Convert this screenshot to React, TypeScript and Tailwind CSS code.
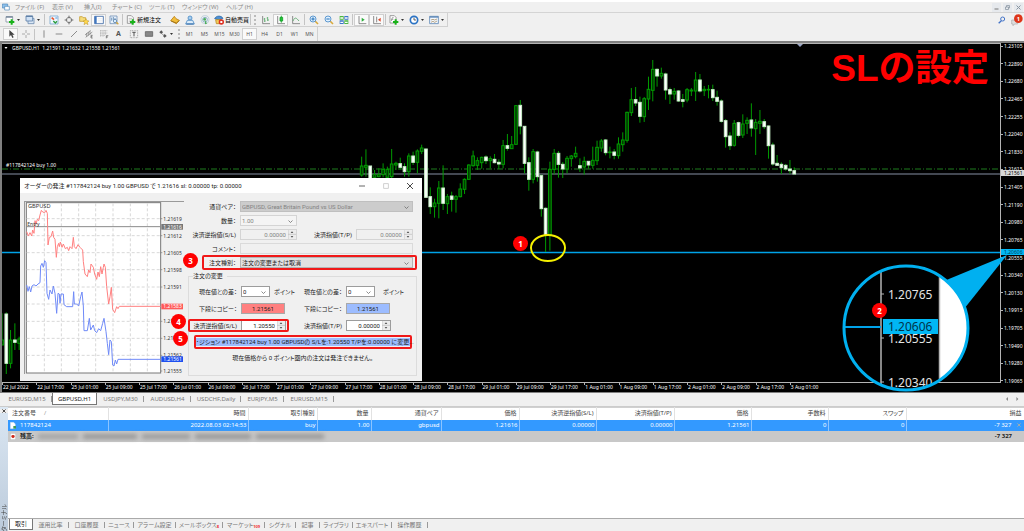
import type { ReactNode } from "react"

// Candle runs. Numbers are thirds of a pixel: high, low, body top, body bottom, 1 = bearish
type Run = { x: number; y: number; rows: number[][] }

const STEP = 12.86

const runs: Run[] = [
  {
    x: 6,
    y: 450,
    rows: [
      [490, 585, 570, 585, 0], [487, 672, 492, 640, 1], [540, 655, 570, 640, 0], [520, 600, 570, 577, 1], [560, 600, 567, 580, 0],
    ],
  },
  {
    x: 1085,
    y: 240,
    rows: [
      [230, 290, 258, 285, 0], [208, 290, 256, 262, 0], [258, 292, 258, 300, 1], [270, 300, 284, 292, 0], [265, 292, 284, 290, 0],
      [250, 292, 268, 284, 0], [260, 300, 268, 292, 0], [207, 300, 252, 290, 0], [245, 270, 250, 255, 0], [233, 268, 251, 262, 1],
      [250, 290, 260, 275, 1], [220, 290, 228, 275, 0], [215, 255, 228, 247, 1], [208, 280, 213, 247, 0], [194, 222, 204, 214, 0],
      [206, 354, 207, 352, 1], [322, 402, 350, 380, 1], [356, 413, 369, 380, 0], [303, 415, 324, 370, 0], [256, 390, 324, 370, 1],
      [342, 402, 350, 371, 0], [335, 395, 348, 358, 1], [345, 398, 350, 358, 0], [310, 352, 327, 350, 0], [295, 342, 298, 328, 0],
      [253, 300, 255, 298, 0], [212, 260, 228, 257, 0], [232, 270, 242, 256, 0], [230, 266, 232, 248, 0], [226, 252, 231, 242, 1],
      [229, 265, 236, 242, 0], [222, 250, 238, 248, 1], [238, 267, 247, 252, 1], [180, 265, 197, 253, 0], [162, 212, 197, 205, 1],
      [168, 207, 194, 206, 0], [75, 195, 77, 193, 0], [60, 163, 76, 138, 1], [138, 280, 139, 250, 1], [232, 332, 248, 298, 1],
      [207, 310, 215, 298, 0], [212, 305, 216, 290, 1],
    ],
  },
  {
    x: 1624,
    y: 150,
    rows: [
      [374, 500, 377, 476, 1], [472, 606, 475, 556, 1], [335, 602, 358, 553, 0], [297, 373, 310, 358, 0], [303, 383, 310, 343, 1],
      [336, 384, 343, 357, 1], [318, 370, 325, 357, 0], [315, 350, 318, 326, 0], [290, 325, 310, 320, 0], [325, 366, 347, 354, 1],
      [320, 374, 334, 351, 0], [333, 356, 334, 345, 1], [290, 356, 331, 346, 0], [272, 345, 292, 332, 0], [267, 305, 273, 294, 0],
      [267, 316, 270, 308, 1], [290, 325, 306, 308, 0], [297, 328, 306, 316, 1], [262, 326, 282, 317, 0], [247, 305, 270, 284, 0],
      [185, 278, 187, 271, 0], [114, 198, 149, 188, 0], [111, 168, 149, 159, 1], [140, 218, 157, 199, 1], [141, 216, 146, 200, 0],
      [80, 180, 118, 147, 0], [30, 154, 58, 121, 0], [55, 110, 58, 78, 1], [53, 86, 70, 78, 0], [68, 149, 72, 120, 1],
      [113, 162, 119, 132, 1], [114, 149, 124, 132, 0], [120, 156, 123, 153, 1], [132, 172, 149, 154, 1], [114, 157, 119, 150, 0],
      [114, 138, 120, 123, 0], [66, 153, 90, 123, 0], [72, 128, 90, 123, 1], [108, 138, 118, 122, 0], [105, 145, 118, 120, 0],
      [104, 153, 119, 143, 1], [122, 167, 142, 154, 1], [148, 218, 153, 214, 1], [207, 293, 212, 260, 1], [247, 300, 258, 287, 1],
      [210, 290, 220, 286, 0], [215, 262, 218, 256, 1], [193, 264, 222, 255, 0], [202, 252, 211, 220, 0], [160, 260, 210, 234, 1],
      [207, 315, 217, 236, 0], [180, 252, 214, 220, 0], [207, 237, 215, 230, 1], [226, 326, 228, 287, 1], [278, 347, 285, 342, 1],
      [315, 346, 340, 346, 1], [337, 372, 343, 353, 1], [342, 362, 346, 357, 1], [330, 372, 357, 362, 1], [352, 374, 362, 372, 1],
    ],
  },
]

const prices = [
  "1.23105", "1.22890", "1.22680", "1.22465", "1.22255", "1.22040", "1.21830", "1.21615", "1.21405", "1.21190",
  "1.20980", "1.20765", "1.20555", "1.20340", "1.20130", "1.19915", "1.19705", "1.19490", "1.19280", "1.19065",
]

const times = [
  "22 Jul 2022", "22 Jul 17:00", "25 Jul 01:00", "25 Jul 09:00", "25 Jul 17:00", "26 Jul 01:00", "26 Jul 09:00", "26 Jul 17:00",
  "27 Jul 01:00", "27 Jul 09:00", "27 Jul 17:00", "28 Jul 01:00", "28 Jul 09:00", "28 Jul 17:00", "29 Jul 01:00", "29 Jul 09:00",
  "29 Jul 17:00", "1 Aug 01:00", "1 Aug 09:00", "1 Aug 17:00", "2 Aug 01:00", "2 Aug 09:00", "2 Aug 17:00", "3 Aug 01:00",
]

const redTicks =
  "80,245 85,258 90,248 95,258 98,240 102,250 105,212 108,222 112,208 116,212 120,195 124,181 128,186 134,188 138,181 142,190 144,285 148,262 153,260 158,243 161,262 165,268 169,322 172,290 176,280 178,290 181,276 186,292 190,282 196,296 202,292 206,302 210,290 216,296 220,262 223,290 228,296 234,284 240,292 248,300 250,335 255,372 262,380 266,360 270,368 273,342 280,352 284,372 290,388 294,366 298,380 302,350 306,372 310,352 312,342 316,352 320,410 326,462 330,440 334,412 338,478 344,488 350,470 354,476 358,469 482,469"
const blueTicks =
  "80,405 84,424 88,410 92,426 96,408 102,404 108,408 114,402 120,398 122,348 126,340 130,352 134,332 138,338 141,430 146,448 150,420 156,432 160,408 165,430 170,490 174,430 178,432 180,460 183,432 190,432 192,464 200,470 218,470 221,425 223,462 230,462 236,468 242,440 246,426 250,468 252,542 262,542 268,505 272,540 280,525 284,542 290,548 296,536 302,542 308,520 312,505 318,545 322,580 326,614 330,570 334,575 338,645 342,648 346,630 350,642 354,628 482,628"

const tickPrices: [number, string][] = [
  [206, "1.21619"], [257, "1.21612"], [308, "1.21605"], [359, "1.21598"], [411, "1.21591"],
  [514, "1.21576"], [565, "1.21569"], [616, "1.21562"], [663, "1.21555"],
]

// Toolbar icons, all on a 30 x 30 grid
function Icon({ children }: { children: ReactNode }) {
  return (
    <svg viewBox="0 0 30 30" className="size-[10px] shrink-0" fill="none" strokeWidth="2.5">
      {children}
    </svg>
  )
}

const plus = <path d="M20 13v16M12 21h16" stroke="#19b219" strokeWidth="6" />

const icons: Record<string, ReactNode> = {
  newChart: <Icon><path d="M3 5h20v16H3z" fill="#fff" stroke="#8795a3" /><path d="M3 6h20" stroke="#6f8196" strokeWidth="4" />{plus}</Icon>,
  profiles: <Icon><path d="M9 10h18v16H9z" fill="#dbe8f6" stroke="#6d8cae" /><path d="M3 3h20v15H3z" fill="#cfe1f5" stroke="#5f81a8" /><path d="M3 4h20" stroke="#5f81a8" strokeWidth="4" /></Icon>,
  market: <Icon><path d="M3 3h24v24H3z" fill="#eef7ff" stroke="#7ba9d0" /><path d="M8 8l7 6" stroke="#e8562d" strokeWidth="5" /><path d="M13 18l6 6 5-5" stroke="#2a9d3c" strokeWidth="4" /><path d="M19 9h6" stroke="#2f7fd0" /></Icon>,
  target: <Icon><circle cx="15" cy="15" r="8" stroke="#777" /><path d="M15 2v8M15 20v8M2 15h8M20 15h8" stroke="#666" strokeWidth="3" /></Icon>,
  folders: <Icon><path d="M2 5h8l2 3h8v11H2z" fill="#f5dc7a" stroke="#c9a13a" /><path d="M21 11l3 6 6 1-5 4 2 7-6-4-6 4 2-7-5-4 6-1z" fill="#ffd84a" stroke="#bf9221" strokeWidth="1.5" /></Icon>,
  terminal: <Icon><path d="M2 4h26v22H2z" fill="#fff" stroke="#3c68a3" /><path d="M5 4v22" stroke="#3f76c0" strokeWidth="6" /><path d="M12 11h14M12 16h14M12 21h14" stroke="#d6dfe8" strokeWidth="1.5" /></Icon>,
  tester: <Icon><path d="M3 3h21v23H3z" fill="#e9f2fb" stroke="#7394b8" /><path d="M8 8v9M13 6v9M18 9v7" stroke="#5b85b0" /><circle cx="18" cy="18" r="5" fill="#d9efff" stroke="#6488ac" /><path d="M22 22l6 6" stroke="#d6a63b" strokeWidth="4" /></Icon>,
  order: <Icon><path d="M4 2h12l6 6v17H4z" fill="#fff" stroke="#8b8b8b" /><path d="M8 10h10M8 15h7M8 20h5" stroke="#b4b4b4" />{plus}</Icon>,
  hat: <Icon><path d="M2 17L13 4l5 7 10 5-9 10z" fill="#f1bd3a" stroke="#ba8115" /><path d="M3 18l16 6 9-7" stroke="#8c6011" strokeWidth="2" /></Icon>,
  community: <Icon><circle cx="15" cy="9" r="6" fill="#a8cff0" stroke="#4a8ac4" /><path d="M7 16h16l5 11H2z" fill="#dcecfa" stroke="#4a8ac4" /><path d="M4 27h22" stroke="#2b67a6" strokeWidth="3" /></Icon>,
  signal: <Icon><circle cx="15" cy="14" r="12" stroke="#b7cbd8" /><circle cx="15" cy="14" r="7" stroke="#7aa8c2" /><circle cx="14" cy="13" r="4" fill="#4cae5b" /><path d="M15 15v13l6-2z" fill="#4cae5b" /></Icon>,
  auto: <Icon><path d="M2 11C6 1 22 1 27 10l-12 5z" fill="#4f8fd0" stroke="#2f6cab" /><path d="M5 14h16l-2 12H7z" fill="#f4cd5c" stroke="#b98c24" /><circle cx="22" cy="21" r="8" fill="#dd2f21" /><path d="M19 18h6v6h-6z" fill="#fff" /></Icon>,
  bars: <Icon><path d="M5 3v23h22" stroke="#777" /><path d="M11 9v12M8 12h3M11 18h3M20 6v12M17 9h3M20 15h4" stroke="#58a868" /></Icon>,
  candles: <Icon><path d="M5 3v23h22" stroke="#777" /><path d="M16 2v21" stroke="#12a126" /><path d="M12 7h8v11h-8z" fill="#24c139" stroke="#12a126" /></Icon>,
  line: <Icon><path d="M5 3v23h22" stroke="#777" /><path d="M6 18C12 4 16 9 24 18" stroke="#58a868" /></Icon>,
  zoomIn: <Icon><path d="M18 18l9 9" stroke="#d9a93a" strokeWidth="5" /><circle cx="12" cy="12" r="9" fill="#dff0ff" stroke="#4588c8" /><path d="M12 7v10M7 12h10" stroke="#2672b8" strokeWidth="3" /></Icon>,
  zoomOut: <Icon><path d="M18 18l9 9" stroke="#d9a93a" strokeWidth="5" /><circle cx="12" cy="12" r="9" fill="#dff0ff" stroke="#4588c8" /><path d="M7 12h10" stroke="#2672b8" strokeWidth="3" /></Icon>,
  tile: <Icon><path d="M2 3h12v11H2zM16 16h12v11H16z" fill="#4bb73f" /><path d="M16 3h12v11H16zM2 16h12v11H2z" fill="#3c76c8" /><path d="M4 9h8M18 9h8M4 22h8M18 22h8" stroke="#fff" strokeWidth="4" /></Icon>,
  scroll: <Icon><path d="M6 3v23h22" stroke="#777" /><path d="M14 8l9 6-9 6z" fill="#2eae3d" /></Icon>,
  shift: <Icon><path d="M5 3v23h22M14 5v17" stroke="#777" /><path d="M26 8l-8 6 8 6z" fill="#dc4a2c" /></Icon>,
  indicator: <Icon><path d="M3 2h13l5 5v17H3z" fill="#fff" stroke="#8b8b8b" /><path d="M7 18l3-10h4M7 13h6" stroke="#777" strokeWidth="2" />{plus}</Icon>,
  clock: <Icon><circle cx="15" cy="15" r="11" fill="#fff" stroke="#2b73c4" strokeWidth="5" /><path d="M15 8v7h6" stroke="#444" /></Icon>,
  template: <Icon><path d="M2 4h26v22H2z" fill="#f3f9ff" stroke="#5b86b5" /><path d="M2 6h26" stroke="#5b86b5" strokeWidth="4" /><path d="M6 15l6-2 5 2 7-3M6 22l6-3 5 3 7-4" stroke="#9a7a4c" strokeWidth="2" /></Icon>,
  cursor: <Icon><path d="M10 3v20l5-5 4 9 4-2-4-8h7z" fill="#444" /></Icon>,
  cross: <Icon><path d="M15 3v9M15 18v9M3 15h9M18 15h9" stroke="#888" strokeWidth="2" /></Icon>,
  vline: <Icon><path d="M15 4v22" stroke="#777" /></Icon>,
  hline: <Icon><path d="M5 15h20" stroke="#777" /></Icon>,
  trend: <Icon><path d="M6 24L24 6" stroke="#777" /></Icon>,
  channel: <Icon><path d="M3 18L20 4M5 25L25 9M8 12v11M13 9v11M18 6v11" stroke="#777" strokeWidth="2" /><path d="M26 19h-5v8h5M21 23h4" stroke="#555" strokeWidth="2" /></Icon>,
  fibo: <Icon><path d="M3 5h22M3 12h22M3 19h16M5 4v20M12 4v20M19 4v14" stroke="#aaa" strokeWidth="2" strokeDasharray="3 1" /><path d="M22 28v-8h6M22 24h5" stroke="#555" strokeWidth="2" /></Icon>,
  label: <Icon><path d="M4 5h22v21H4z" stroke="#888" strokeWidth="2" strokeDasharray="3 2" /><path d="M10 10h10M15 10v12" stroke="#555" strokeWidth="3" /></Icon>,
  rect: <Icon><path d="M4 8h22v14H4z" fill="#888" stroke="#666" /></Icon>,
  arrows: <Icon><path d="M4 10l6-6 5 6-5 5z" fill="#555" /><path d="M15 21l5-6 6 6-6 5z" fill="#555" /><path d="M12 14l5 5" stroke="#777" /></Icon>,
}

function Tool({ name, label, active, menu, text }: { name: string; label: string; active?: boolean; menu?: boolean; text?: string }) {
  return (
    <button
      aria-label={label}
      className={
        "flex h-3 shrink-0 items-center " +
        (active ? "w-[15px] justify-center border border-[#d0d0d0] bg-[#fafafa]" : menu ? "w-5 gap-0.5 pl-0.5" : text ? "gap-px pl-0.5" : "w-[15px] justify-center")
      }
    >
      {icons[name]}
      {text && <span className="text-[6px] text-black">{text}</span>}
      {menu && <svg viewBox="0 0 6 4" className="h-[2px] w-[3px]"><path d="M0 0h6L3 4z" fill="#333" /></svg>}
    </button>
  )
}

const Sep = () => <span className="mx-px h-[11px] w-px shrink-0 bg-[#c4c4c4]" />
const Grip = () => <span className="mx-[2px] h-[10px] shrink-0 border-l-2 border-dotted border-[#bbb]" />

function TimeFrame({ name, active }: { name: string; active?: boolean }) {
  return (
    <button className={"h-3 w-[15px] shrink-0 text-[5px] text-[#555] " + (active ? "border border-[#d0d0d0] bg-[#fafafa]" : "")}>{name}</button>
  )
}

function Header() {
  return (
    <header className="shrink-0 bg-[#f0f0f0]">
      <div className="flex h-[13px] items-center border-t-2 border-b border-t-white border-b-[#d4d4d4] text-[6px] text-[#8c8c8c]">
        <svg viewBox="0 0 24 24" className="mr-[5px] ml-[2px] size-2">
          <path d="M1 3h16v12H1z" fill="#8ec1ec" stroke="#4d86ba" strokeWidth="2" />
          <path d="M8 10h14v11H8z" fill="#fff" stroke="#4d86ba" strokeWidth="2" />
        </svg>
        <nav className="flex">
          <a href="#" className="w-[37px]">ファイル (F)</a>
          <a href="#" className="w-8">表示 (V)</a>
          <a href="#" className="w-7">挿入(I)</a>
          <a href="#" className="w-[37px]">チャート (C)</a>
          <a href="#" className="w-[33px]">ツール (T)</a>
          <a href="#" className="w-11">ウィンドウ (W)</a>
          <a href="#">ヘルプ (H)</a>
        </nav>
        <div className="ml-auto flex gap-[2px] pr-px">
          <button aria-label="最小化" className="flex size-[9px] items-center justify-center bg-[#e6e9ed]"><svg viewBox="0 0 10 10" className="size-[5px]"><path d="M1 8h8" stroke="#777" strokeWidth="2" /></svg></button>
          <button aria-label="元に戻す" className="flex size-[9px] items-center justify-center bg-[#e6e9ed]"><svg viewBox="0 0 10 10" className="size-[5px]" fill="none" stroke="#8894a0" strokeWidth="1.5"><path d="M1 4h6v5H1zM3 4V1h6v5H7" /></svg></button>
          <button aria-label="閉じる" className="flex size-[9px] items-center justify-center bg-[#e6e9ed]"><svg viewBox="0 0 10 10" className="size-[5px]"><path d="M1 1l8 8M9 1L1 9" stroke="#8894a0" strokeWidth="2" /></svg></button>
        </div>
      </div>
      <div className="flex">
        <div>
          <div className="flex h-[14px] items-center border-r border-b border-[#d0d0d0] pl-[3px]">
            <Tool name="newChart" label="新規チャート" menu />
            <Tool name="profiles" label="プロファイル" menu />
            <Sep />
            <Tool name="market" label="気配値表示" />
            <Tool name="target" label="データウィンドウ" />
            <Tool name="folders" label="ナビゲーター" />
            <Tool name="terminal" label="ターミナル" active />
            <Tool name="tester" label="ストラテジーテスター" />
            <Sep />
            <Tool name="order" label="新規注文" text="新規注文" />
            <span className="w-[6px]" />
            <Tool name="hat" label="MetaEditor" />
            <Tool name="community" label="コミュニティ" />
            <Tool name="signal" label="シグナル" />
            <Tool name="auto" label="自動売買" text="自動売買" />
            <Sep />
            <Grip />
            <Tool name="bars" label="バーチャート" />
            <Tool name="candles" label="ローソク足" active />
            <Tool name="line" label="ラインチャート" />
            <Sep />
            <Tool name="zoomIn" label="拡大" />
            <Tool name="zoomOut" label="縮小" />
            <Tool name="tile" label="整列" />
            <Sep />
            <Tool name="scroll" label="自動スクロール" active />
            <Tool name="shift" label="チャートシフト" active />
            <Sep />
            <Tool name="indicator" label="インディケータ" menu />
            <Tool name="clock" label="時間足" menu />
            <Tool name="template" label="テンプレート" menu />
          </div>
          <div className="flex">
            <div className="flex h-[14px] items-center border-r border-[#d0d0d0] pl-[3px]">
              <Tool name="cursor" label="カーソル" active />
              <Tool name="cross" label="十字カーソル" />
              <Sep />
              <Tool name="vline" label="垂直線" />
              <Tool name="hline" label="水平線" />
              <Tool name="trend" label="トレンドライン" />
              <Tool name="channel" label="チャネル" />
              <Tool name="fibo" label="フィボナッチ" />
              <button className="h-3 w-[15px] text-[7px] leading-3 font-bold text-[#555]">A</button>
              <Tool name="label" label="テキストラベル" />
              <Tool name="rect" label="図形" />
              <Tool name="arrows" label="矢印" menu />
              <Grip />
              <TimeFrame name="M1" />
              <TimeFrame name="M5" />
              <TimeFrame name="M15" />
              <TimeFrame name="M30" />
              <TimeFrame name="H1" active />
              <TimeFrame name="H4" />
              <TimeFrame name="D1" />
              <TimeFrame name="W1" />
              <TimeFrame name="MN" />
            </div>
          </div>
        </div>
        <div className="ml-auto flex items-start gap-[5px] pt-px pr-px">
          <button aria-label="検索" className="pt-[2px]">
            <svg viewBox="0 0 24 24" className="size-2" fill="none"><circle cx="14" cy="9" r="6" stroke="#4474c8" strokeWidth="3" /><path d="M10 14l-8 8" stroke="#4474c8" strokeWidth="4" /></svg>
          </button>
          <button aria-label="通知 1">
            <svg viewBox="0 0 36 36" className="size-3">
              <path d="M2 18h18v12h-9l-5 5v-5H2z" fill="#ddd" stroke="#aaa" strokeWidth="2" />
              <circle cx="22" cy="14" r="13" fill="#dd3418" />
              <text x="22" y="20" textAnchor="middle" fontSize="17" fontWeight="700" fill="#fff">1</text>
            </svg>
          </button>
        </div>
      </div>
    </header>
  )
}

function Candles() {
  return (
    <g transform="translate(-2 -44) scale(.33333)">
      {runs.map((run) =>
        run.rows.map(([high, low, top, bottom, bear], i) => {
          const x = run.x + i * STEP
          return (
            <g key={x} stroke="#009c00" strokeWidth="3">
              <path d={`M${x} ${run.y + high}V${run.y + low}`} />
              <rect
                x={x - 4}
                y={run.y + top}
                width="8"
                height={Math.max(bottom - top, 2)}
                fill={bear ? "#fff" : "#003c00"}
                stroke={bear ? "#c8f0c8" : "#009c00"}
              />
            </g>
          )
        })
      )}
    </g>
  )
}

function Chart() {
  return (
    <div className="flex">
      <div className="min-w-0 grow">
        <div className="relative border-t border-r border-b border-[#b4b4b4]">
          <svg className="block h-[338px] w-full">
            <line x1="0" y1="125" x2="100%" y2="125" stroke="#1e7d1e" strokeDasharray="6 2 1 2" />
            <line x1="0" y1="130" x2="100%" y2="130" stroke="#5a616e" strokeWidth="1.4" />
            <line x1="0" y1="208.5" x2="100%" y2="208.5" stroke="#00a2e8" strokeWidth="1.4" />
            <path d="M795 0h6l-3 3z" fill="#9aa5c4" />
            <Candles />
          </svg>
          <p className="absolute top-0 left-[2px] flex h-2 items-center gap-1 text-[5px] text-white">
            <svg viewBox="0 0 6 4" className="h-[2px] w-1"><path d="M0 0h6L3 4z" fill="#fff" /></svg>
            GBPUSD,H1&nbsp; 1.21591 1.21632 1.21558 1.21561
          </p>
          <p className="absolute top-[118px] left-1 text-[5px] leading-[7px] text-white">#117842124 buy 1.00</p>
        </div>
        <div className="grid h-[9px] w-[822px] grid-cols-24 text-[5px] leading-[9px] whitespace-nowrap text-white">
          {times.map((t) => (
            <span key={t} className="flex"><span className="h-[2px] w-px bg-[#b4b4b4]" />{t}</span>
          ))}
        </div>
      </div>
      <div className="relative flex h-[341px] w-[23px] shrink-0 flex-col justify-between text-[5px] leading-[6px] text-white">
        {prices.map((p) => (
          <span key={p} className="flex items-center gap-px"><span className="h-px w-[2px] bg-[#b4b4b4]" />{p}</span>
        ))}
        <span className="absolute top-[127px] left-0 w-full bg-[#d8d8d8] pl-[3px] text-black">1.21561</span>
        <span className="absolute top-[206px] left-0 w-full bg-[#00b7f4] pl-[3px] text-[#003a50]">1.20606</span>
      </div>
    </div>
  )
}

function Magnifier() {
  return (
    <svg viewBox="834 240 190 156" className="absolute top-[197px] right-0 h-[156px] w-[190px]">
      <defs>
        <clipPath id="lens"><circle cx="906" cy="328" r="62" /></clipPath>
      </defs>
      <path d="M944 281L1007 255 964 309z" fill="#00b0f0" />
      <g clipPath="url(#lens)">
        <rect x="834" y="262" width="140" height="140" fill="#000" />
        <rect x="939" y="262" width="40" height="140" fill="#fff" />
        <path d="M881 262v140M939.500 262v140" stroke="#b4b4b4" strokeWidth="1.500" />
        <path d="M881 294h3M881 338h3M881 382h3" stroke="#b4b4b4" />
        <path d="M840 327h41" stroke="#00a2e8" strokeWidth="2" />
        <g fontSize="12" fill="#e4e4e4">
          <text x="888" y="299">1.20765</text>
          <text x="888" y="343">1.20555</text>
          <text x="888" y="387">1.20340</text>
          <rect x="883" y="319" width="55" height="15" fill="#00b7f4" />
          <text x="888" y="331" fill="#00344a">1.20606</text>
        </g>
      </g>
      <circle cx="906" cy="328" r="62" fill="none" stroke="#00b0f0" strokeWidth="3" />
    </svg>
  )
}

function Badge({ n, place }: { n: number; place: string }) {
  return (
    <span className={"absolute flex size-[15px] items-center justify-center rounded-full bg-[#ff0000] text-[8px] leading-none font-bold text-white " + place}>{n}</span>
  )
}

function TickChart() {
  return (
    <svg viewBox="72 153 480 519" className="h-[173px] w-[160px] shrink-0 font-['Noto_Sans',sans-serif]" fill="none">
      <path d="M72 672V153H552" stroke="#9a9a9a" strokeWidth="6" />
      <rect x="78" y="158" width="474" height="514" fill="#f0f0f0" />
      <rect x="79" y="158" width="403" height="511" fill="#fff" stroke="#777" strokeWidth="3" />
      <path d="M133 160v508M184 160v508M236 160v508M287 160v508M339 160v508M391 160v508M442 160v508" stroke="#d8d8d8" strokeWidth="3" strokeDasharray="9 6" />
      <path d="M80 206h402M80 257h402M80 308h402M80 359h402M80 411h402M80 462h402M80 514h402M80 565h402M80 616h402" stroke="#d8d8d8" strokeWidth="3" strokeDasharray="9 6" />
      <path d="M80 230h402" stroke="#8a8a8a" strokeWidth="3" />
      <polyline points={redTicks} stroke="#ff8080" strokeWidth="3" />
      <polyline points={blueTicks} stroke="#6f8af8" strokeWidth="3" />
      <g fontSize="15" fill="#333">
        <text x="84" y="175" fontSize="17">GBPUSD</text>
        <text x="82" y="229" fontSize="15">Entry</text>
        {tickPrices.map(([y, p]) => (
          <g key={p}>
            <path d={`M482 ${y}h5`} stroke="#777" strokeWidth="2" />
            <text x="490" y={y + 6}>{p}</text>
          </g>
        ))}
        <rect x="484" y="222" width="65" height="17" fill="#777" />
        <rect x="484" y="461" width="65" height="17" fill="#ff5a5a" />
        <rect x="484" y="619" width="65" height="17" fill="#1e50f0" />
        <g fill="#fff">
          <text x="490" y="236">1.21616</text>
          <text x="490" y="475">1.21583</text>
          <text x="490" y="633">1.21561</text>
        </g>
      </g>
    </svg>
  )
}

const Chevron = () => (
  <svg viewBox="0 0 10 6" className="pointer-events-none absolute top-1 right-[3px] h-[3px] w-[5px]" fill="none"><path d="M1 1l4 4 4-4" stroke="#666" strokeWidth="1.500" /></svg>
)

function Select({ id, value, look, disabled }: { id: string; value: string; look: string; disabled?: boolean }) {
  return (
    <span className={"relative block h-[11px] shrink-0 border " + look}>
      <select id={id} disabled={disabled} className="block h-[9px] w-full appearance-none pl-px leading-[9px] opacity-100">
        <option>{value}</option>
      </select>
      <Chevron />
    </span>
  )
}

function Spin({ id, value, look, disabled }: { id: string; value: string; look: string; disabled?: boolean }) {
  return (
    <span className={"flex h-[11px] shrink-0 border " + look}>
      <input id={id} defaultValue={value} disabled={disabled} className="w-full min-w-0 pr-[2px] text-right leading-[9px]" />
      <svg viewBox="0 0 24 27" className="h-[9px] w-2 shrink-0"><path d="M0 0h24v27H0z" fill="#ececec" /><path d="M0 0v27M0 13h24" stroke="#bbb" strokeWidth="2" /><path d="M8 9l4-5 4 5zM8 18l4 5 4-5z" fill="#555" /></svg>
    </span>
  )
}

function Label({ id, children }: { id: string; children: ReactNode }) {
  return <label htmlFor={id} className="w-12 shrink-0 text-right whitespace-nowrap">{children}</label>
}

const row = "flex h-[11px] items-center gap-1 whitespace-nowrap"

function OrderDialog() {
  return (
    <section role="dialog" aria-label="オーダーの発注" className="absolute top-[135px] left-[18px] w-[402px] bg-[#f0f0f0] font-['Roboto','Noto_Sans_CJK_JP',sans-serif] text-[6px] text-[#222]">
      <div className="flex h-[15px] items-center bg-white pr-[9px] pl-1">
        <h2>オーダーの発注 #117842124 buy 1.00 GBPUSD で 1.21616 sl: 0.00000 tp: 0.00000</h2>
        <div className="ml-auto flex gap-[18px]">
          <button aria-label="最小化"><svg viewBox="0 0 10 10" className="size-[6px]"><path d="M0 5h10" stroke="#555" strokeWidth="1.500" /></svg></button>
          <button aria-label="最大化" disabled><svg viewBox="0 0 10 10" className="size-[6px]" fill="none"><path d="M1 1h8v8H1z" stroke="#ccc" strokeWidth="1.500" /></svg></button>
          <button aria-label="閉じる"><svg viewBox="0 0 10 10" className="size-[6px]"><path d="M0 0l10 10M10 0L0 10" stroke="#333" strokeWidth="1.500" /></svg></button>
        </div>
      </div>
      <form className="flex gap-1 pt-2 pr-[5px] pb-[5px] pl-1">
        <TickChart />
        <div className="min-w-0 grow">
          <div className="flex flex-col gap-[3px]">
            <div className={row}>
              <Label id="pair">通貨ペア：</Label>
              <Select id="pair" value="GBPUSD, Great Britain Pound vs US Dollar" look="w-[173px] border-[#bfbfbf] bg-[#cccccc] text-[#838383]" disabled />
            </div>
            <div className={row}>
              <Label id="volume">数量：</Label>
              <Select id="volume" value="1.00" look="w-[57px] border-[#d4d4d4] bg-[#f4f4f4] text-[#838383]" disabled />
            </div>
            <div className={row}>
              <Label id="sl">決済逆指値(S/L)</Label>
              <Spin id="sl" value="0.00000" look="w-[57px] border-[#d4d4d4] text-[#838383]" disabled />
              <label htmlFor="tp" className="w-[51px] text-right">決済指値(T/P)</label>
              <Spin id="tp" value="0.00000" look="w-[57px] border-[#d4d4d4] text-[#838383]" disabled />
            </div>
            <div className={row}>
              <Label id="comment">コメント：</Label>
              <input id="comment" disabled className="h-[11px] w-[173px] border border-[#dadada]" />
            </div>
            <div className={row + " relative"}>
              <Label id="kind">注文種別：</Label>
              <Select id="kind" value="注文の変更または取消" look="w-[173px] border-[#b4b4b4] bg-[#e1e1e1]" />
              <span className="absolute -inset-y-[2px] right-0 left-[14px] rounded-xs border-2 border-[#f01818]" />
            </div>
          </div>
          <fieldset className="mt-1 h-[104px] border border-[#dcdcdc]">
            <legend className="ml-1 pr-1 leading-[8px]">注文の変更</legend>
            <div className="grid grid-cols-[105px_1fr] gap-y-[6px] pt-[6px]">
              <div className={row}>
                <Label id="sl-diff">現在値との差：</Label>
                <Select id="sl-diff" value="0" look="w-[29px] border-[#9c9c9c] bg-white" />
                <span>ポイント</span>
              </div>
              <div className={row}>
                <Label id="tp-diff">現在値との差：</Label>
                <Select id="tp-diff" value="0" look="w-[29px] border-[#9c9c9c] bg-white" />
                <span className="ml-1">ポイント</span>
              </div>
              <div className={row}>
                <Label id="bid">下段にコピー：</Label>
                <button id="bid" type="button" className="h-[11px] w-11 border border-[#a8a8a8] bg-[#ff8080] leading-[9px]">1.21561</button>
              </div>
              <div className={row}>
                <Label id="ask">下段にコピー：</Label>
                <button id="ask" type="button" className="h-[11px] w-11 border border-[#a8a8a8] bg-[#9cbcff] leading-[9px]">1.21561</button>
              </div>
              <div className={row + " relative"}>
                <Label id="new-sl">決済逆指値(S/L)</Label>
                <Spin id="new-sl" value="1.20550" look="w-[45px] border-[#9c9c9c] bg-white" />
                <span className="absolute -inset-y-px -left-px w-[101px] rounded-xs border-2 border-[#f01818]" />
              </div>
              <div className={row}>
                <Label id="new-tp">決済指値(T/P)</Label>
                <Spin id="new-tp" value="0.00000" look="w-[45px] border-[#9c9c9c] bg-white" />
              </div>
            </div>
            <div className="mt-1 ml-[5px] w-[218px] rounded-xs border-2 border-[#f01818] py-px">
              <button type="button" className="block h-2 w-full bg-[#9cbcff] leading-[8px] whitespace-nowrap">
                ･ジション #117842124 buy 1.00 GBPUSDの S/Lを:1.20550 T/Pを:0.00000 に変更...
              </button>
            </div>
            <p className="mt-1 text-center leading-[9px]">現在価格から 0 ポイント圏内の注文は発注できません。</p>
          </fieldset>
        </div>
      </form>
    </section>
  )
}

function ChartTab({ name, w, active }: { name: string; w: string; active?: boolean }) {
  return (
    <a href="#" className={"relative flex h-3 shrink-0 items-center justify-center " + w + (active ? " border border-t-0 border-[#777] bg-white text-[#222]" : " text-[#777]")}>
      {name}
      {!active && <span className="absolute right-0 h-[6px] w-px bg-[#999]" />}
    </a>
  )
}

function BottomTab({ name, w, count }: { name: string; w: string; count?: string }) {
  return (
    <a href="#" className={"flex h-[11px] shrink-0 items-center justify-center whitespace-nowrap " + w}>
      <span className="grow text-center">{name}{count && <sub className="text-[4px] font-bold text-[#f03030]">{count}</sub>}</span>
      <span className="h-[6px] w-px bg-[#999]" />
    </a>
  )
}

const columns = [
  { name: "注文番号", w: "w-[100px]", value: "117842124" },
  { name: "時間", w: "w-[140px]", value: "2022.08.03 02:14:53" },
  { name: "取引種別", w: "w-[69px]", value: "buy" },
  { name: "数量", w: "w-[54px]", value: "1.00" },
  { name: "通貨ペア", w: "w-[70px]", value: "gbpusd" },
  { name: "価格", w: "w-[78px]", value: "1.21616" },
  { name: "決済逆指値(S/L)", w: "w-[77px]", value: "0.00000" },
  { name: "決済指値(T/P)", w: "w-[78px]", value: "0.00000" },
  { name: "価格", w: "w-[77px]", value: "1.21561" },
  { name: "手数料", w: "w-[77px]", value: "0" },
  { name: "スワップ", w: "w-[78px]", value: "0" },
  { name: "損益", w: "w-[118px]", value: "-7 327" },
]

function Terminal() {
  return (
    <section className="flex grow bg-white text-[6px]">
      <div className="flex w-2 shrink-0 flex-col items-center justify-between bg-linear-to-b from-[#dbe7f3] to-[#bccbdb]">
        <button aria-label="閉じる" className="mt-[2px] flex w-full justify-center bg-[#f0f0f0]"><svg viewBox="0 0 10 10" className="size-1"><path d="M1 1l8 8M9 1L1 9" stroke="#222" strokeWidth="2" /></svg></button>
        <span className="rotate-180 text-[#444] [text-orientation:sideways] [writing-mode:vertical-rl]">ターミナル</span>
      </div>
      <div className="flex min-w-0 grow flex-col">
        <table className="w-full table-fixed border-t border-[#d0d0d0]">
          <thead>
            <tr className="h-3 text-[#444]">
              {columns.map((c, i) => (
                <th key={i} className={"border-r border-[#e2e2e2] p-0 font-normal leading-[11px] " + c.w + (i === 0 ? " pl-1 text-left" : " pr-[2px] text-right")}>
                  {c.name}
                  {i === 0 && <span className="ml-2 text-[#999]">/</span>}
                </th>
              ))}
            </tr>
          </thead>
          <tbody>
            <tr className="h-[11px] bg-[#3399ff] text-white">
              {columns.map((c, i) => (
                <td key={i} className="border-r border-[#8cc4ff] p-0 pr-px text-right leading-[11px] first:text-left">
                  {i === 0 ? (
                    <span className="flex items-center gap-1 pl-[2px]">
                      <svg viewBox="0 0 18 21" className="h-[7px] w-[6px]"><path d="M1 1h10l5 5v14H1z" fill="#fff" stroke="#bcd" /><path d="M10 12h8v8h-8z" fill="#3c9a58" /></svg>
                      {c.value}
                    </span>
                  ) : i === 11 ? (
                    <span className="flex items-center justify-end gap-[5px] pr-[2px]">
                      {c.value}
                      <button aria-label="決済"><svg viewBox="0 0 10 10" className="block size-1"><path d="M1 1l8 8M9 1L1 9" stroke="#b9b09c" strokeWidth="2" /></svg></button>
                    </span>
                  ) : (
                    c.value
                  )}
                </td>
              ))}
            </tr>
            <tr className="h-[11px] bg-[#c8c8c8] font-bold text-[#222]">
              <td colSpan={11} className="p-0 leading-[11px]">
                <span className="flex items-center gap-1 pl-[2px]">
                  <svg viewBox="0 0 18 21" className="h-[7px] w-[6px]"><path d="M1 1h16v19H1z" fill="#fff" stroke="#999" /><path d="M9 6v9M4 10h10" stroke="#d02a1a" strokeWidth="5" /></svg>
                  残高:
                  <span className="flex gap-[5px] blur-[2px]">
                    <span className="h-[5px] w-10 bg-[#a4a4a4]" /><span className="h-[5px] w-[54px] bg-[#989898]" /><span className="h-[5px] w-12 bg-[#9c9c9c]" /><span className="h-[5px] w-14 bg-[#989898]" /><span className="h-[5px] w-[68px] bg-[#999]" />
                  </span>
                </span>
              </td>
              <td className="p-0 pr-3 text-right leading-[11px]">-7 327</td>
            </tr>
          </tbody>
        </table>
        <nav className="mt-auto flex h-[13px] items-start overflow-hidden border-t border-[#aaa] bg-[#f0f0f0] pl-px text-[#777]">
          <a href="#" className="flex h-[11px] w-6 shrink-0 items-center justify-center border border-t-0 border-[#777] bg-white text-[#222]">取引</a>
          <BottomTab name="運用比率" w="w-9" />
          <BottomTab name="口座履歴" w="w-9" />
          <BottomTab name="ニュース" w="w-[29px]" />
          <BottomTab name="アラーム設定" w="w-[42px]" />
          <BottomTab name="メールボックス" w="w-[47px]" count="8" />
          <BottomTab name="マーケット" w="w-[42px]" count="109" />
          <BottomTab name="シグナル" w="w-[31px]" />
          <BottomTab name="記事" w="w-6" />
          <BottomTab name="ライブラリ" w="w-[33px]" />
          <BottomTab name="エキスパート" w="w-[39px]" />
          <BottomTab name="操作履歴" w="w-9" />
        </nav>
      </div>
    </section>
  )
}

export default function App() {
  return (
    <main className="flex min-h-screen flex-col overflow-hidden bg-[#f0f0f0] font-['Noto_Sans','Noto_Sans_CJK_JP',sans-serif] leading-none [font-feature-settings:'palt']">
      <Header />
      <section className="relative shrink-0 border-t-2 border-b border-l-2 border-[#808080] bg-black">
        <Chart />
        <h1 className="absolute top-[7px] right-[35px] font-['Liberation_Sans','Noto_Sans_CJK_JP',sans-serif] text-[37px] leading-[38px] font-bold text-[#ff0000]">SLの設定</h1>
        <span className="absolute top-[191px] left-[528px] h-7 w-9 rounded-[50%] border-2 border-[#f5f000]" />
        <Magnifier />
        <OrderDialog />
        <Badge n={1} place="top-[193px] left-[511px]" />
        <Badge n={2} place="top-[260px] right-[137px]" />
        <Badge n={3} place="top-[210px] left-[181px]" />
        <Badge n={4} place="top-[271px] left-[169px]" />
        <Badge n={5} place="top-[288px] left-[171px]" />
      </section>
      <nav className="flex h-[14px] shrink-0 items-start border-b border-[#ccc] pl-[2px] text-[6px]">
        <ChartTab name="EURUSD,M15" w="w-[50px]" />
        <ChartTab name="GBPUSD,H1" w="w-[45px]" active />
        <ChartTab name="USDJPY,M30" w="w-[47px]" />
        <ChartTab name="AUDUSD,H4" w="w-[47px]" />
        <ChartTab name="USDCHF,Daily" w="w-[50px]" />
        <ChartTab name="EURJPY,M5" w="w-[43px]" />
        <ChartTab name="EURUSD,M15" w="w-[50px]" />
        <svg viewBox="0 0 40 10" className="mt-1 mr-1 ml-auto h-1 w-4 shrink-0"><path d="M10 0v10L5 5zM31 0v10l5-5z" fill="#888" /></svg>
      </nav>
      <Terminal />
    </main>
  )
}
